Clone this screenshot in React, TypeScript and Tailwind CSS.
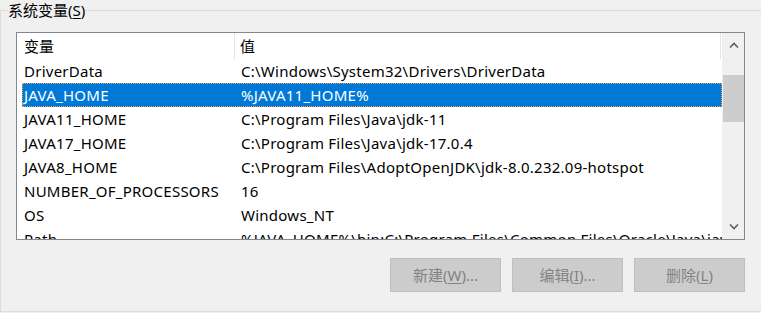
const rows: [string, string][] = [
  ["DriverData", "C:\\Windows\\System32\\Drivers\\DriverData"],
  ["JAVA_HOME", "%JAVA11_HOME%"],
  ["JAVA11_HOME", "C:\\Program Files\\Java\\jdk-11"],
  ["JAVA17_HOME", "C:\\Program Files\\Java\\jdk-17.0.4"],
  ["JAVA8_HOME", "C:\\Program Files\\AdoptOpenJDK\\jdk-8.0.232.09-hotspot"],
  ["NUMBER_OF_PROCESSORS", "16"],
  ["OS", "Windows_NT"],
  ["Path", "%JAVA_HOME%\\bin;C:\\Program Files\\Common Files\\Oracle\\Java\\javapath"],
];

function Chevron({ up }: { up?: boolean }) {
  return (
    <svg width="10" height="6" viewBox="0 0 10 6" className="block">
      <path
        d={up ? "M1 5.5 L5 1.5 L9 5.5" : "M1 0.5 L5 4.5 L9 0.5"}
        fill="none"
        stroke="#606060"
        strokeWidth="1.6"
      />
    </svg>
  );
}

function Button({ label, acc, tail }: { label: string; acc: string; tail: string }) {
  return (
    <div className="flex h-[34px] w-[111px] items-center justify-center border border-[#bfbfbf] bg-[#cccccc] text-[15px] text-[#838383]">
      {label}(<span className="underline underline-offset-2">{acc}</span>){tail}
    </div>
  );
}

export default function App() {
  return (
    <div
      className="h-[313px] w-[761px] overflow-hidden bg-[#f0f0f0] text-black"
      style={{ fontFamily: '"Noto Sans", "Noto Sans CJK SC", sans-serif' }}
    >
      <fieldset className="m-0 h-[312px] w-[780px] border border-[#dcdcdc] pl-[15px] pr-0 pt-0 pb-0">
        <legend className="-ml-[8px] px-0 text-[15px] leading-[20px]">
          系统变量(<span className="underline underline-offset-2">S</span>)
        </legend>

        {/* List */}
        <div className="mt-[12px] flex h-[208px] w-[729px] border border-[#828790] bg-white">
          <div className="w-[705px] overflow-hidden">
            {/* Header */}
            <div className="flex h-[26px] items-center text-[15px]">
              <div className="flex h-full w-[218px] shrink-0 items-center border-r border-[#e5e5e5] pl-[7px]">变量</div>
              <div className="flex h-full w-[486px] shrink-0 items-center border-r border-[#e5e5e5] pl-[5px]">值</div>
            </div>
            {rows.map(([name, value]) => {
              const sel = name === "JAVA_HOME";
              return (
                <div
                  key={name}
                  className={
                    "ml-[5px] flex h-[24px] w-[700px] items-center overflow-hidden whitespace-nowrap text-[15px] tracking-[0.25px] " +
                    (sel
                      ? "bg-[#0078d7] text-white outline-1 -outline-offset-1 outline-dotted outline-[#f0a040]"
                      : "")
                  }
                >
                  <div className="w-[217px] shrink-0 pl-[2px]">{name}</div>
                  <div className="shrink-0 pl-[2px]">{value}</div>
                </div>
              );
            })}
          </div>
          {/* Scrollbar */}
          <div className="flex w-[22px] flex-col bg-[#f0f0f0]">
            <div className="flex h-[24px] items-center justify-center pl-[1px]">
              <Chevron up />
            </div>
            <div className="ml-[1px] mt-[18px] h-[47px] bg-[#cdcdcd]" />
            <div className="flex-1" />
            <div className="flex h-[24px] items-center justify-center pl-[1px]">
              <Chevron />
            </div>
          </div>
        </div>

        {/* Buttons */}
        <div className="mt-[18px] flex w-[729px] justify-end gap-[11px]">
          <Button label="新建" acc="W" tail="..." />
          <Button label="编辑" acc="I" tail="..." />
          <Button label="删除" acc="L" tail="" />
        </div>
      </fieldset>
    </div>
  );
}
